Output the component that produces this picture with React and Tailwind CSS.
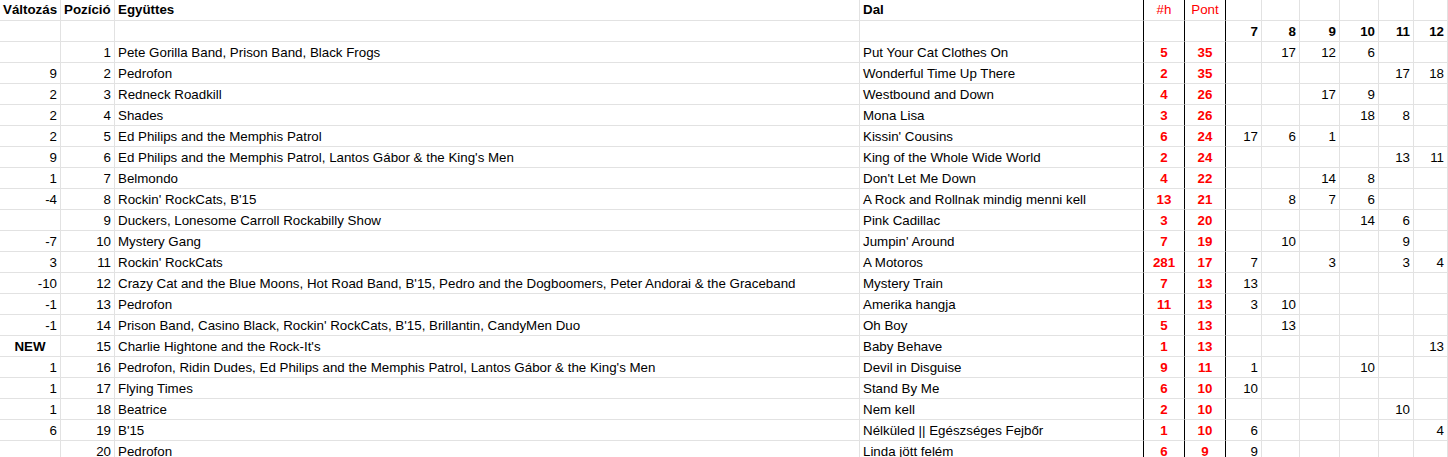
const rows = [
  ['', 1, 'Pete Gorilla Band, Prison Band, Black Frogs', 'Put Your Cat Clothes On', 5, 35, ['', 17, 12, 6, '', '']],
  [9, 2, 'Pedrofon', 'Wonderful Time Up There', 2, 35, ['', '', '', '', 17, 18]],
  [2, 3, 'Redneck Roadkill', 'Westbound and Down', 4, 26, ['', '', 17, 9, '', '']],
  [2, 4, 'Shades', 'Mona Lisa', 3, 26, ['', '', '', 18, 8, '']],
  [2, 5, 'Ed Philips and the Memphis Patrol', "Kissin' Cousins", 6, 24, [17, 6, 1, '', '', '']],
  [9, 6, "Ed Philips and the Memphis Patrol, Lantos Gábor & the King's Men", 'King of the Whole Wide World', 2, 24, ['', '', '', '', 13, 11]],
  [1, 7, 'Belmondo', "Don't Let Me Down", 4, 22, ['', '', 14, 8, '', '']],
  [-4, 8, "Rockin' RockCats, B'15", 'A Rock and Rollnak mindig menni kell', 13, 21, ['', 8, 7, 6, '', '']],
  ['', 9, 'Duckers, Lonesome Carroll Rockabilly Show', 'Pink Cadillac', 3, 20, ['', '', '', 14, 6, '']],
  [-7, 10, 'Mystery Gang', "Jumpin' Around", 7, 19, ['', 10, '', '', 9, '']],
  [3, 11, "Rockin' RockCats", 'A Motoros', 281, 17, [7, '', 3, '', 3, 4]],
  [-10, 12, "Crazy Cat and the Blue Moons, Hot Road Band, B'15, Pedro and the Dogboomers, Peter Andorai & the Graceband", 'Mystery Train', 7, 13, [13, '', '', '', '', '']],
  [-1, 13, 'Pedrofon', 'Amerika hangja', 11, 13, [3, 10, '', '', '', '']],
  [-1, 14, "Prison Band, Casino Black, Rockin' RockCats, B'15, Brillantin, CandyMen Duo", 'Oh Boy', 5, 13, ['', 13, '', '', '', '']],
  ['NEW', 15, "Charlie Hightone and the Rock-It's", 'Baby Behave', 1, 13, ['', '', '', '', '', 13]],
  [1, 16, "Pedrofon, Ridin Dudes, Ed Philips and the Memphis Patrol, Lantos Gábor & the King's Men", 'Devil in Disguise', 9, 11, [1, '', '', 10, '', '']],
  [1, 17, 'Flying Times', 'Stand By Me', 6, 10, [10, '', '', '', '', '']],
  [1, 18, 'Beatrice', 'Nem kell', 2, 10, ['', '', '', '', 10, '']],
  [6, 19, "B'15", 'Nélküled || Egészséges Fejbőr', 1, 10, [6, '', '', '', '', 4]],
  ['', 20, 'Pedrofon', 'Linda jött felém', 6, 9, [9, '', '', '', '', '']],
];

// grey gridline cell / cell with a black right edge
const cell = 'h-[21px] border-b border-r border-[#e2e2e2] px-[3px] pt-[1px] flex items-center whitespace-nowrap overflow-hidden';
const edge = 'h-[21px] border-b border-r border-b-[#e2e2e2] border-r-black px-[3px] pt-[1px] flex items-center whitespace-nowrap';
const head = 'h-[21px] border-b border-r border-[#e2e2e2] px-[3px] flex items-center whitespace-nowrap';
const headEdge = 'h-[21px] border-b border-r border-b-[#e2e2e2] border-r-black px-[3px] flex items-center whitespace-nowrap';

export default function App() {
  return (
    <div className="w-[1448px] h-[457px] overflow-hidden bg-white text-[13.33px] text-black" style={{ fontFamily: '"Liberation Sans", Arial, sans-serif' }}>
      <div className="grid grid-cols-[61px_54px_745px_284px_41px_41px_36px_38px_40px_39px_35px_34px]">
        <div className={`${head} font-bold`}>Változás</div>
        <div className={`${head} font-bold`}>Pozíció</div>
        <div className={`${head} font-bold`}>Együttes</div>
        <div className={`${headEdge} font-bold`}>Dal</div>
        <div className={`${headEdge} justify-center text-[#ff0000]`}>#h</div>
        <div className={`${headEdge} justify-center text-[#ff0000]`}>Pont</div>
        {[0, 1, 2, 3, 4, 5].map((i) => (
          <div key={i} className={head}></div>
        ))}

        <div className={cell}></div>
        <div className={cell}></div>
        <div className={cell}></div>
        <div className={edge}></div>
        <div className={edge}></div>
        <div className={edge}></div>
        {[7, 8, 9, 10, 11, 12].map((n) => (
          <div key={n} className={`${cell} justify-end font-bold`}>{n}</div>
        ))}

        {rows.map((r) => (
          <Row key={r[1]} r={r} />
        ))}
      </div>
    </div>
  );
}

function Row({ r }) {
  const [chg, pos, band, song, h, pont, weeks] = r;
  return (
    <>
      <div className={`${cell} ${chg === 'NEW' ? 'justify-center font-bold' : 'justify-end'}`}>{chg}</div>
      <div className={`${cell} justify-end`}>{pos}</div>
      <div className={cell}>{band}</div>
      <div className={edge}>{song}</div>
      <div className={`${edge} justify-center font-bold text-[#ff0000]`}>{h}</div>
      <div className={`${edge} justify-center font-bold text-[#ff0000]`}>{pont}</div>
      {weeks.map((w, i) => (
        <div key={i} className={`${cell} justify-end`}>{w}</div>
      ))}
    </>
  );
}
